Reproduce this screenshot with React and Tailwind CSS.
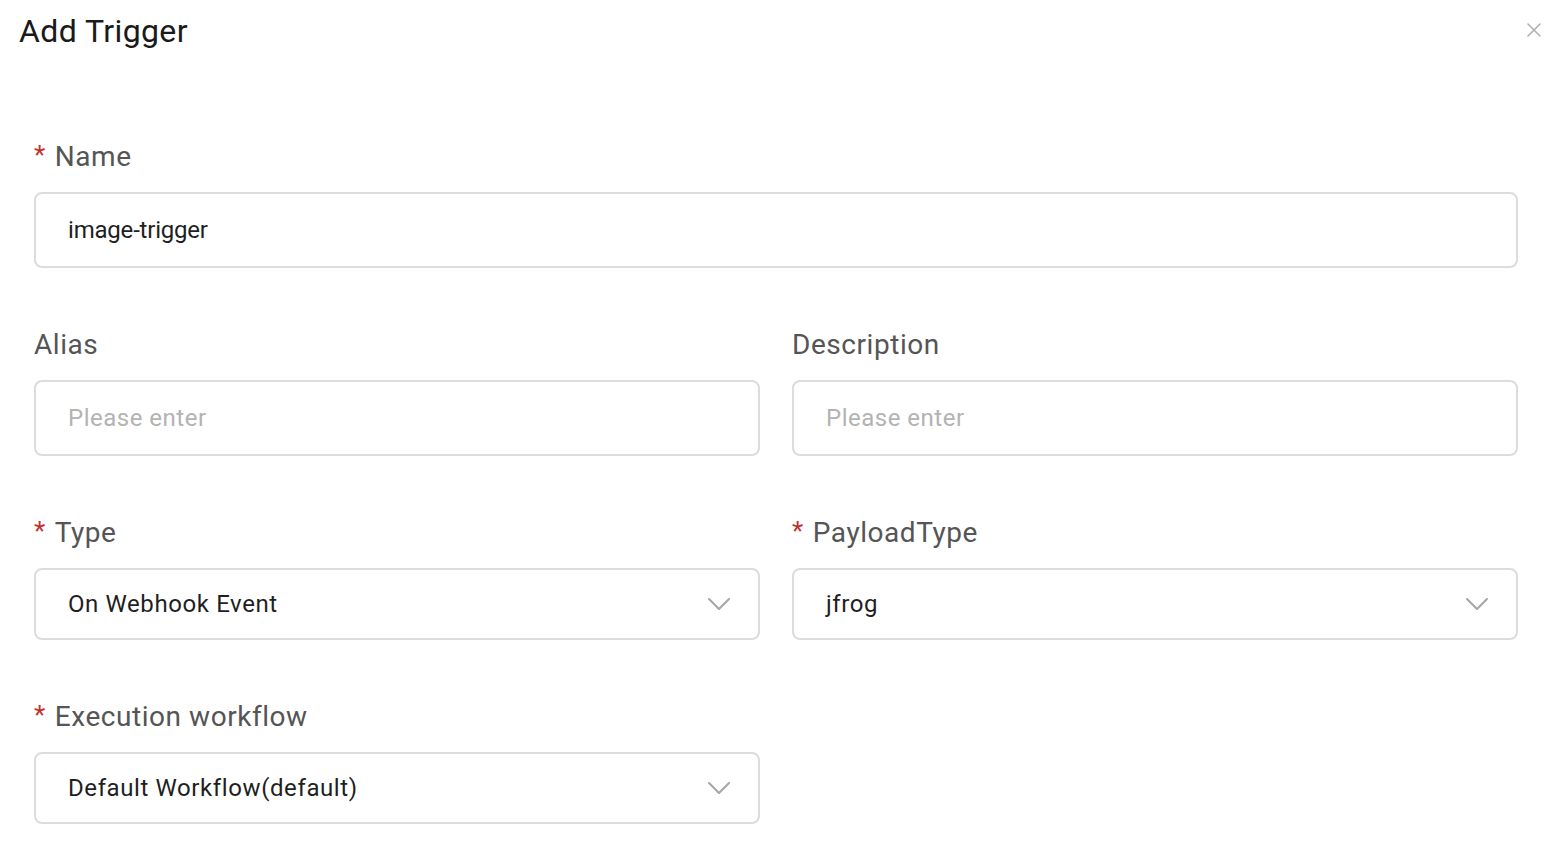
import React from "react";

const font = { fontFamily: "Roboto, 'Noto Sans', sans-serif" };

function Chevron() {
  return (
    <svg width="22" height="12" viewBox="0 0 22 12" fill="none" className="shrink-0">
      <path d="M1 1l10 10L21 1" stroke="#a6a6a6" strokeWidth="2" strokeLinecap="round" strokeLinejoin="round" />
    </svg>
  );
}

function Label({ text, required }) {
  return (
    <div className="h-[40px] flex items-center text-[28px] leading-[40px] text-[#555555] mb-[15px] tracking-[0.55px]">
      {required && <span className="text-[#c0322b] text-[26px] mr-[9px] relative top-[-2px]">*</span>}
      <span>{text}</span>
    </div>
  );
}

function Input({ value, placeholder, h = "h-[76px]" }) {
  return (
    <div className={`${h} w-full border-2 border-[#dcdcdc] rounded-[8px] flex items-center pl-[32px] text-[24px]`}>
      {value ? (
        <span className="text-[#1f1f1f] tracking-[-0.2px]">{value}</span>
      ) : (
        <span className="text-[#b3b3b3] tracking-[0.5px]">{placeholder}</span>
      )}
    </div>
  );
}

function Select({ value }) {
  return (
    <div className="h-[72px] w-full border-2 border-[#dcdcdc] rounded-[8px] flex items-center justify-between pl-[32px] pr-[28px] text-[24px] tracking-[0.6px]">
      <span className="text-[#1f1f1f]">{value}</span>
      <Chevron />
    </div>
  );
}

export default function App() {
  return (
    <div className="w-[1556px] h-[860px] bg-white overflow-hidden" style={font}>
      <div className="flex items-start justify-between pt-[11px] pl-[19px] pr-[15px]">
        <div className="text-[32px] leading-[40px] text-[#1a1a1a] tracking-[0.4px]">Add Trigger</div>
        <svg width="14" height="14" viewBox="0 0 14 14" className="mt-[12px]">
          <path d="M1 1l12 12M13 1L1 13" stroke="#b0b0b0" strokeWidth="1.6" strokeLinecap="round" />
        </svg>
      </div>
      <div className="pl-[34px] pr-[38px] pt-[86px]">
        <Label text="Name" required />
        <Input value="image-trigger" />
        <div className="grid grid-cols-2 gap-x-[32px] mt-[57px]">
          <div>
            <Label text="Alias" />
            <Input placeholder="Please enter" />
          </div>
          <div>
            <Label text="Description" />
            <Input placeholder="Please enter" />
          </div>
        </div>
        <div className="grid grid-cols-2 gap-x-[32px] mt-[57px]">
          <div>
            <Label text="Type" required />
            <Select value="On Webhook Event" />
          </div>
          <div>
            <Label text="PayloadType" required />
            <Select value="jfrog" />
          </div>
        </div>
        <div className="grid grid-cols-2 gap-x-[32px] mt-[57px]">
          <div>
            <Label text="Execution workflow" required />
            <Select value="Default Workflow(default)" />
          </div>
        </div>
      </div>
    </div>
  );
}
